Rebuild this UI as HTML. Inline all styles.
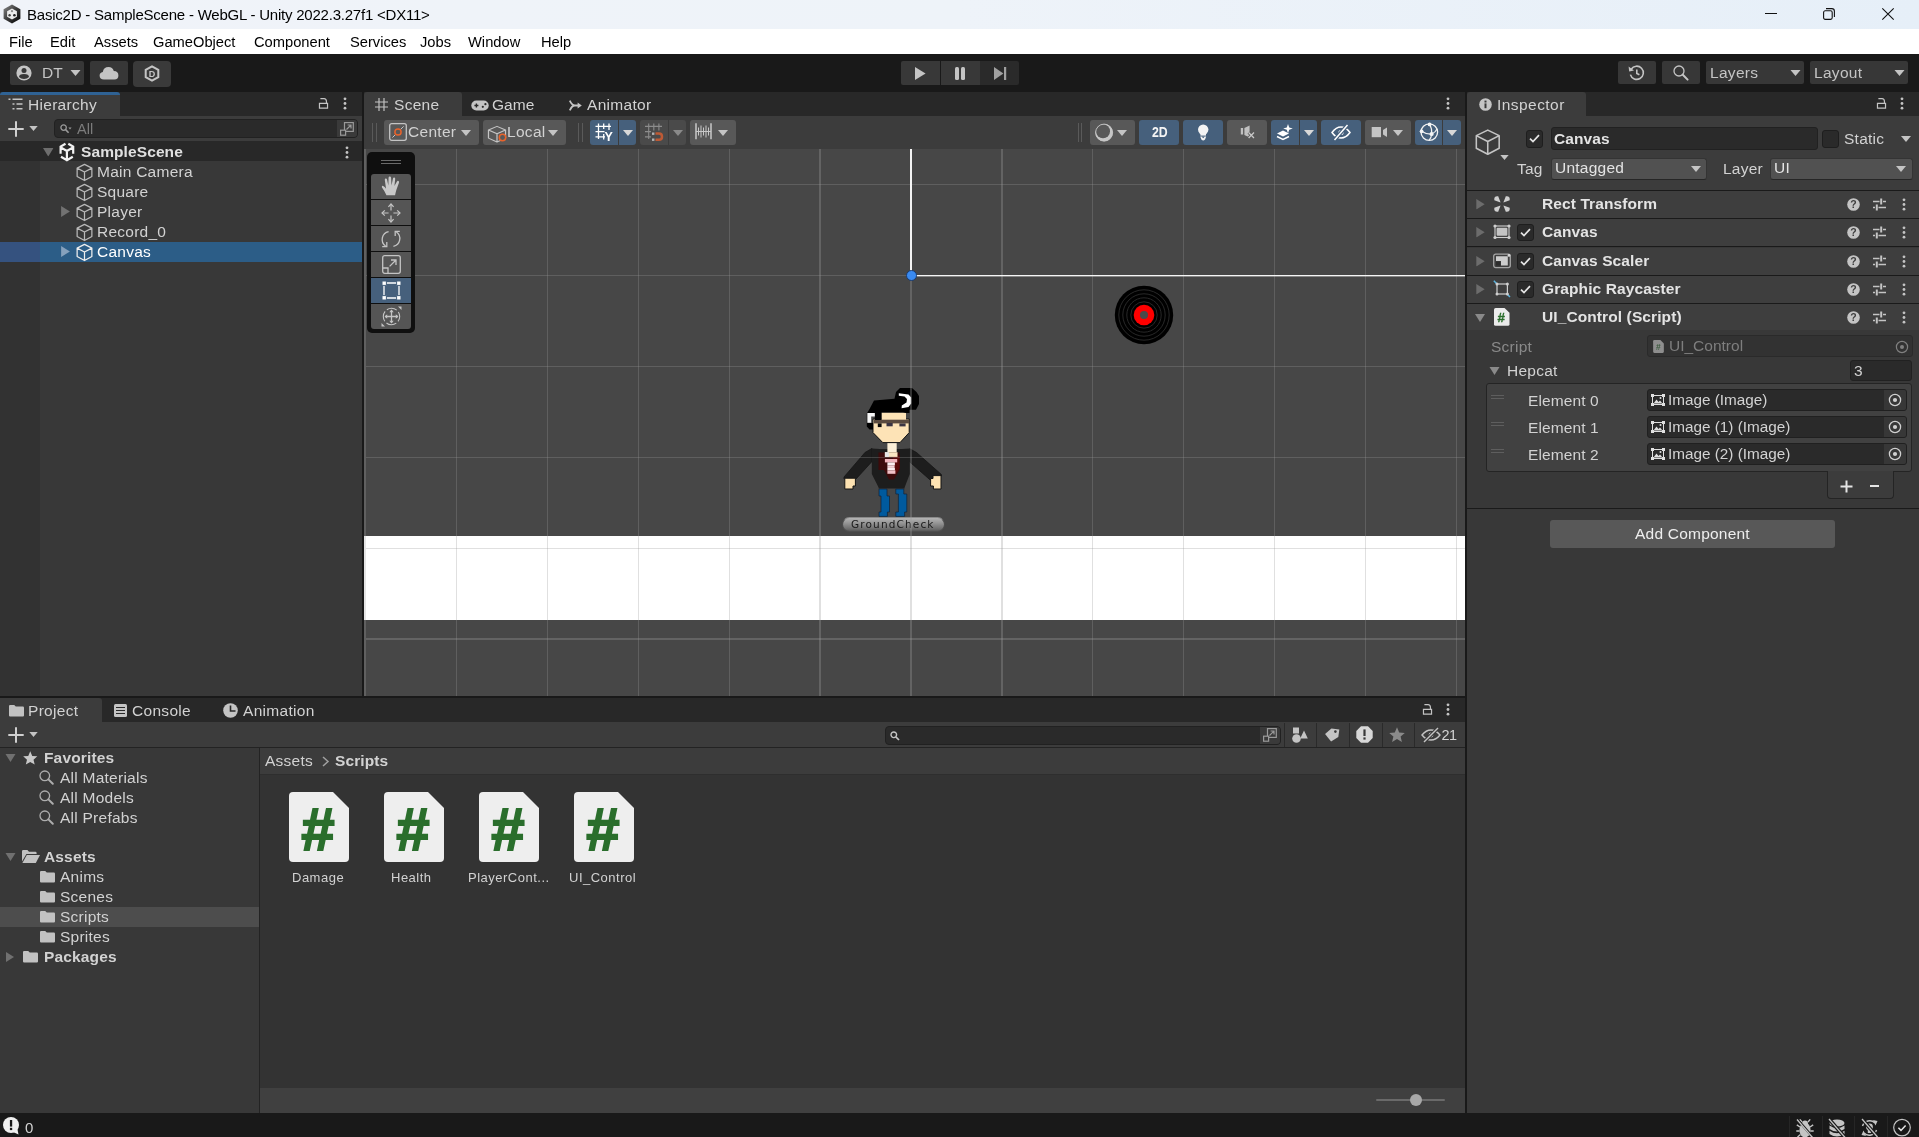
<!DOCTYPE html>
<html lang="en">
<head>
<meta charset="utf-8">
<title>Basic2D - SampleScene - WebGL - Unity 2022.3.27f1 &lt;DX11&gt;</title>
<style>
*{box-sizing:border-box;margin:0;padding:0}
html,body{width:1919px;height:1137px;overflow:hidden;background:#191919;font-family:"Liberation Sans",sans-serif;}
body{position:relative;will-change:transform;-webkit-font-smoothing:antialiased}
.a{position:absolute}
.t{position:absolute;white-space:nowrap;color:#d2d2d2;font-size:15px;line-height:20px;height:20px}
.b{font-weight:bold}
.h{font-size:15.5px;letter-spacing:.25px}
.k{color:#000}
.m{font-size:14.7px;color:#000;top:31.500px}
svg{position:absolute;overflow:visible}
.btn{position:absolute;background:#585858;border-radius:3px}
.bon{position:absolute;background:#46607c;border-radius:3px}
.fld{position:absolute;background:#2a2a2a;border:1px solid #212121;border-radius:3px}
.hl{position:absolute;height:1px;background:#1f1f1f}
.gv{position:absolute;top:149px;width:1px;height:547px;background:rgba(153,153,153,.3)}
.gh{position:absolute;left:366px;width:1099px;height:1px;background:rgba(153,153,153,.3)}
</style>
</head>
<body>

<svg width="0" height="0" style="position:absolute">
<defs>
<symbol id="cube" viewBox="0 0 16 16"><path d="M8 1.2 L14.2 4.3 L14.2 11.4 L8 14.8 L1.8 11.4 L1.8 4.3 Z M1.8 4.3 L8 7.6 L14.2 4.3 M8 7.6 L8 14.8" fill="none" stroke="currentColor" stroke-width="1.05" stroke-linejoin="round"/></symbol>
<symbol id="keb" viewBox="0 0 4 14"><circle cx="2" cy="2" r="1.5" fill="currentColor"/><circle cx="2" cy="7" r="1.5" fill="currentColor"/><circle cx="2" cy="12" r="1.5" fill="currentColor"/></symbol>
<symbol id="lock" viewBox="0 0 12 12" preserveAspectRatio="none"><path d="M1.6 6.4 h8.8 v4.8 h-8.8 Z" fill="none" stroke="currentColor" stroke-width="1.3"/><path d="M2.600 1.700 H6.600 Q9.200 1.700 9.200 4.300 V6.400" fill="none" stroke="currentColor" stroke-width="1.300"/></symbol>
<symbol id="dd" viewBox="0 0 10 6"><path d="M0 0 H10 L5 6 Z" fill="currentColor"/></symbol>
<symbol id="fr" viewBox="0 0 8 10"><path d="M0 0 L8 5 L0 10 Z" fill="currentColor"/></symbol>
<symbol id="fd" viewBox="0 0 10 8"><path d="M0 0 H10 L5 8 Z" fill="currentColor"/></symbol>
</defs>
</svg>
<!-- TITLE BAR -->
<div class="a" id="titlebar" style="left:0;top:0;width:1919px;height:29px;background:linear-gradient(90deg,#f0f3f9 0%,#eef3f9 50%,#e6eff8 100%)"></div>
<div class="t k" style="left:27px;top:5px;font-size:15px;letter-spacing:-.22px">Basic2D - SampleScene - WebGL - Unity 2022.3.27f1 &lt;DX11&gt;</div>

<svg style="left:3px;top:4px" width="18" height="20" viewBox="0 0 18 20"><defs><linearGradient id="ug" x1="0" y1="0" x2="1" y2="1"><stop offset="0" stop-color="#8a8a8a"/><stop offset=".5" stop-color="#3a3a3a"/><stop offset="1" stop-color="#000"/></linearGradient></defs><path d="M9 0.600 L17.400 5.300 V14.700 L9 19.400 L0.600 14.700 V5.300 Z" fill="url(#ug)"/><path d="M9 4.400 L13.900 7.200 V12.800 L9 15.600 L4.100 12.800 V7.200 Z" fill="#ececec"/><circle cx="9" cy="7.200" r="1.100" fill="#8a8a8a"/><circle cx="6.600" cy="11.200" r="1.200" fill="#444"/><circle cx="11.400" cy="11.200" r="1.300" fill="#222"/></svg>
<div class="a" style="left:1765px;top:13px;width:12px;height:1px;background:#111"></div>
<svg style="left:1823px;top:8px" width="12" height="12" viewBox="0 0 12 12"><rect x="0.600" y="2.800" width="8.600" height="8.600" rx="1.600" fill="none" stroke="#111" stroke-width="1.100"/><path d="M3 0.600 H8.800 Q11.400 0.600 11.400 3.200 V9" fill="none" stroke="#111" stroke-width="1.100"/></svg>
<svg style="left:1882px;top:8px" width="12" height="12" viewBox="0 0 12 12"><path d="M0.300 0.300 L11.700 11.700 M11.700 0.300 L0.300 11.700" stroke="#111" stroke-width="1.100"/></svg>
<!-- MENU BAR -->
<div class="a" id="menubar" style="left:0;top:29px;width:1919px;height:25px;background:#fff"></div>
<div class="t m" style="left:9px">File</div>
<div class="t m" style="left:50px">Edit</div>
<div class="t m" style="left:94px">Assets</div>
<div class="t m" style="left:153px">GameObject</div>
<div class="t m" style="left:254px">Component</div>
<div class="t m" style="left:350px">Services</div>
<div class="t m" style="left:420px">Jobs</div>
<div class="t m" style="left:468px">Window</div>
<div class="t m" style="left:541px">Help</div>
<!-- MAIN TOOLBAR -->
<div class="a" id="toolbar" style="left:0;top:54px;width:1919px;height:38px;background:#191919"></div>


<div class="a" style="left:10px;top:61px;width:74px;height:24px;background:#373737;border-radius:2px"></div>
<svg style="left:16px;top:65px;color:#c4c4c4" width="16" height="16" viewBox="0 0 16 16"><circle cx="8" cy="8" r="7.6" fill="currentColor"/><circle cx="8" cy="5.6" r="2.5" fill="#373737"/><path d="M3 12 Q3 8.9 8 8.9 Q13 8.9 13 12 Q11 14 8 14 Q5 14 3 12Z" fill="#373737"/></svg>
<div class="t" style="left:42px;top:63px;color:#c4c4c4;font-size:15.5px">DT</div>
<svg style="left:70px;top:70px;color:#c4c4c4" width="11" height="6"><use href="#dd"/></svg>
<div class="a" style="left:90px;top:61px;width:38px;height:24px;background:#373737;border-radius:2px"></div>
<svg style="left:99px;top:66px" width="20" height="14" viewBox="0 0 20 14"><path d="M5 13.5 Q0.6 13.5 0.6 9.6 Q0.6 6.6 3.8 6 Q4.6 1 9.6 1 Q13.6 1 14.8 5 Q19.4 5.2 19.4 9.4 Q19.4 13.5 15.4 13.5 Z" fill="#c4c4c4"/></svg>
<div class="a" style="left:133px;top:61px;width:38px;height:26px;background:#3a3a3a;border-radius:4px"></div>
<svg style="left:144px;top:65px" width="16" height="17" viewBox="0 0 16 17"><path d="M8 1.3 L14.3 4.9 V12.1 L8 15.7 L1.7 12.1 V4.9 Z" fill="none" stroke="#c4c4c4" stroke-width="2"/><text x="8" y="11.800" font-size="9" font-weight="bold" text-anchor="middle" fill="#c4c4c4" font-family="Liberation Sans, sans-serif">D</text></svg>
<!-- play controls -->
<div class="a" style="left:901px;top:61px;width:39px;height:24px;background:#383838;border-radius:2px 0 0 2px"></div>
<div class="a" style="left:941px;top:61px;width:39px;height:24px;background:#383838"></div>
<div class="a" style="left:980px;top:61px;width:39px;height:24px;background:#2a2a2a;border-radius:0 2px 2px 0"></div>
<svg style="left:915px;top:67px" width="11" height="13" viewBox="0 0 11 13"><path d="M0 0 L10.6 6.5 L0 13 Z" fill="#c4c4c4"/></svg>
<div class="a" style="left:955px;top:67px;width:4px;height:13px;background:#c4c4c4;border-radius:1.5px"></div>
<div class="a" style="left:961px;top:67px;width:4px;height:13px;background:#c4c4c4;border-radius:1.5px"></div>
<svg style="left:994px;top:67px" width="13" height="13" viewBox="0 0 13 13"><path d="M0 0 L9.4 6.5 L0 13 Z" fill="#a0a0a0"/><rect x="10" y="0" width="2.2" height="13" fill="#a0a0a0"/></svg>
<!-- right toolbar -->
<div class="a" style="left:1618px;top:61px;width:38px;height:23px;background:#373737;border-radius:2px"></div>
<svg style="left:1628px;top:65px" width="17" height="16" viewBox="0 0 17 16"><path d="M3.2 4.2 A6.6 6.6 0 1 1 2.4 9.6" fill="none" stroke="#c4c4c4" stroke-width="1.6"/><path d="M0.6 1.6 L1.2 6.6 L6 5.6 Z" fill="#c4c4c4"/><path d="M8.8 4.4 V8.4 L11.4 9.8" fill="none" stroke="#c4c4c4" stroke-width="1.6"/></svg>
<div class="a" style="left:1662px;top:61px;width:38px;height:23px;background:#373737;border-radius:2px"></div>
<svg style="left:1673px;top:65px" width="16" height="16" viewBox="0 0 16 16"><circle cx="6" cy="6" r="5" fill="none" stroke="#c4c4c4" stroke-width="1.3"/><path d="M9.8 9.8 L14.6 14.6" stroke="#c4c4c4" stroke-width="2" stroke-linecap="round"/></svg>
<div class="a" style="left:1706px;top:61px;width:98px;height:23px;background:#373737;border-radius:2px"></div>
<div class="t" style="left:1710px;top:63px;color:#c4c4c4;font-size:15.5px;letter-spacing:.3px">Layers</div>
<svg style="left:1790px;top:70px;color:#c4c4c4" width="11" height="6"><use href="#dd"/></svg>
<div class="a" style="left:1810px;top:61px;width:98px;height:23px;background:#373737;border-radius:2px"></div>
<div class="t" style="left:1814px;top:63px;color:#c4c4c4;font-size:15.5px;letter-spacing:.3px">Layout</div>
<svg style="left:1894px;top:70px;color:#c4c4c4" width="11" height="6"><use href="#dd"/></svg>

<!-- HIERARCHY PANEL -->
<div class="a" id="hier" style="left:0;top:92px;width:362px;height:604px;background:#383838"></div>

<div class="a" style="left:0;top:92px;width:362px;height:24px;background:#282828"></div>
<div class="a" style="left:0;top:92px;width:120px;height:24px;background:#3c3c3c;border-top:3px solid #2f6294;border-radius:3px 3px 0 0"></div>
<div class="a" style="left:0;top:116px;width:362px;height:25px;background:#3c3c3c"></div>
<svg style="left:8px;top:98px" width="15" height="12" viewBox="0 0 15 12"><path d="M0.5 1.2 H2.5 M4.5 1.2 H14.5 M4.5 6 H6.5 M8.5 6 H14.5 M4.5 10.8 H6.5 M8.5 10.8 H14.5" stroke="#c4c4c4" stroke-width="1.5" fill="none"/></svg>
<div class="t" style="left:28px;top:95px;letter-spacing:.3px;font-size:15.5px">Hierarchy</div>
<svg style="left:318px;top:97px;color:#c4c4c4" width="11" height="12"><use href="#lock"/></svg>
<svg style="left:343px;top:96.5px;color:#c4c4c4" width="4" height="13"><use href="#keb"/></svg>
<!-- search row -->

<svg style="left:8px;top:121px" width="16" height="16" viewBox="0 0 16 16"><path d="M8 0.300 V15.700 M0.300 8 H15.700" stroke="#d0d0d0" stroke-width="2"/></svg>
<svg style="left:29px;top:126px;color:#c4c4c4" width="9" height="5"><use href="#dd"/></svg>
<div class="a" style="left:54px;top:119px;width:304px;height:19px;background:#2a2a2a;border:1px solid #212121;border-radius:4px"></div>
<div class="a" style="left:337px;top:120px;width:20px;height:17px;background:#3a3a3a;border-radius:0 3px 3px 0"></div>
<svg style="left:340px;top:122px" width="14" height="14" viewBox="0 0 14 14"><rect x="4.5" y="0.6" width="8.8" height="8.8" fill="none" stroke="#9a9a9a" stroke-width="1.2"/><rect x="0.6" y="8.2" width="5" height="5" fill="#3a3a3a" stroke="#9a9a9a" stroke-width="1.2"/><path d="M6.5 7.5 L11 3 M7.6 3 H11 V6.4" fill="none" stroke="#9a9a9a" stroke-width="1.2"/></svg>
<svg style="left:60px;top:124px" width="12" height="10" viewBox="0 0 12 10"><circle cx="3.6" cy="3.6" r="2.7" fill="none" stroke="#9a9a9a" stroke-width="1.3"/><path d="M5.6 5.6 L8.6 8.8" stroke="#9a9a9a" stroke-width="1.6"/><path d="M8.4 3.4 H11.6 L10 5.4 Z" fill="#9a9a9a"/></svg>
<div class="t" style="left:77px;top:119px;color:#7c7c7c;font-size:14.5px">All</div>
<!-- tree -->
<div class="a" style="left:0;top:161px;width:40px;height:535px;background:#323232"></div>
<div class="a" style="left:0;top:141px;width:362px;height:20px;background:#282828"></div>
<div class="a" style="left:0;top:242px;width:362px;height:20px;background:#2c5d87"></div>
<div class="a" style="left:0;top:242px;width:40px;height:20px;background:#35527f"></div>
<svg style="left:43px;top:148px;color:#6e6e6e" width="10.500" height="8.500"><use href="#fd"/></svg>
<svg style="left:54px;top:140px" width="26" height="24" viewBox="0 0 26 24"><path d="M12.900 11 V19.500 M12.900 11 L6.800 7.400 M12.900 11 L19 7.400 M11.500 3.700 L6.600 6.600 V13.800 M14.300 3.700 L19.200 6.600 V13.800 M7 16.800 L12.900 20.200 L18.800 16.800" fill="none" stroke="#f2f2f2" stroke-width="2.200"/></svg>
<div class="t b" style="left:81px;top:142px;font-size:15.5px;letter-spacing:.1px;color:#e0e0e0">SampleScene</div>
<svg style="left:345px;top:145.5px;color:#c4c4c4" width="4" height="13"><use href="#keb"/></svg>
<svg style="left:74.5px;top:162.5px;color:#b9b9b9" width="19" height="19"><use href="#cube"/></svg>
<div class="t h" style="left:97px;top:162px">Main Camera</div>
<svg style="left:74.5px;top:182.5px;color:#b9b9b9" width="19" height="19"><use href="#cube"/></svg>
<div class="t h" style="left:97px;top:182px">Square</div>
<svg style="left:61px;top:206px;color:#727272" width="9" height="11"><use href="#fr"/></svg>
<svg style="left:74.5px;top:202.5px;color:#b9b9b9" width="19" height="19"><use href="#cube"/></svg>
<div class="t h" style="left:97px;top:202px">Player</div>
<svg style="left:74.5px;top:222.5px;color:#b9b9b9" width="19" height="19"><use href="#cube"/></svg>
<div class="t h" style="left:97px;top:222px">Record_0</div>
<svg style="left:61px;top:246px;color:#86a1bd" width="9" height="11"><use href="#fr"/></svg>
<svg style="left:74.5px;top:242.5px;color:#f0f0f0" width="19" height="19"><use href="#cube"/></svg>
<div class="t h" style="left:97px;top:242px;color:#fff">Canvas</div>

<!-- SCENE PANEL -->
<div class="a" id="scene" style="left:364px;top:92px;width:1101px;height:604px;background:#3c3c3c"></div>

<div class="a" style="left:364px;top:92px;width:1101px;height:24px;background:#282828"></div>
<div class="a" style="left:364px;top:92px;width:98px;height:24px;background:#3c3c3c;border-radius:3px 3px 0 0"></div>
<svg style="left:375px;top:98px" width="13" height="13" viewBox="0 0 13 13"><path d="M4 0 V13 M9 0 V13 M0 4 H13 M0 9 H13" stroke="#c4c4c4" stroke-width="1.150"/></svg>
<div class="t" style="left:394px;top:95px;letter-spacing:.3px;font-size:15.5px">Scene</div>
<svg style="left:471px;top:100px" width="18" height="11" viewBox="0 0 18 11"><rect x="0.3" y="0.5" width="17.4" height="10" rx="5" fill="#c4c4c4"/><path d="M3.4 5.5 H7.4 M5.4 3.5 V7.5" stroke="#282828" stroke-width="1.4"/><circle cx="11.8" cy="6.8" r="1.1" fill="#282828"/><circle cx="14.4" cy="4.2" r="1.1" fill="#282828"/></svg>
<div class="t" style="left:492px;top:95px;letter-spacing:.05px;font-size:15.5px">Game</div>
<svg style="left:569px;top:98.500px" width="13" height="13" viewBox="0 0 13 13"><path d="M0.800 1.600 Q3 6.500 6 6.500 Q3 6.500 0.800 11.400 M5.400 6.500 H9.400" fill="none" stroke="#c4c4c4" stroke-width="1.8"/><path d="M8.6 3.6 L12.8 6.5 L8.6 9.4 Z" fill="#c4c4c4"/></svg>
<div class="t" style="left:587px;top:95px;letter-spacing:.3px;font-size:15.5px">Animator</div>
<svg style="left:1446px;top:96.5px;color:#c4c4c4" width="4" height="13"><use href="#keb"/></svg>
<!-- scene toolbar -->
<div class="a" style="left:372px;top:123px;width:1px;height:19px;background:#5a5a5a"></div>
<div class="a" style="left:376px;top:123px;width:1px;height:19px;background:#5a5a5a"></div>
<div class="btn" style="left:384px;top:120px;width:95px;height:25px"></div>
<svg style="left:389px;top:123px" width="18" height="18" viewBox="0 0 18 18"><rect x="0.7" y="0.7" width="16.6" height="16.6" rx="2" fill="none" stroke="#c4c4c4" stroke-width="1.3"/><path d="M3.4 14.6 L14.6 3.4" stroke="#c4c4c4" stroke-width="1"/><circle cx="9" cy="9" r="3.1" fill="#585858" stroke="#e8632c" stroke-width="1.5"/></svg>
<div class="t" style="left:408px;top:122px;letter-spacing:.3px;font-size:15.5px">Center</div>
<svg style="left:461px;top:130px;color:#c4c4c4" width="10" height="6"><use href="#dd"/></svg>
<div class="btn" style="left:483px;top:120px;width:83px;height:25px"></div>
<svg style="left:486.200px;top:124.700px;color:#c4c4c4" width="22" height="18.400" viewBox="0 0 16 16" preserveAspectRatio="none"><path d="M8 1.200 L14.200 4.300 L14.200 11.400 L8 14.800 L1.800 11.400 L1.800 4.300 Z M1.800 4.300 L8 7.600 L14.200 4.300 M8 7.600 L8 14.800" fill="none" stroke="currentColor" stroke-width="0.900" stroke-linejoin="round"/></svg>
<svg style="left:498px;top:133px" width="9" height="9" viewBox="0 0 9 9"><circle cx="4.5" cy="4.5" r="3.2" fill="#585858" stroke="#e8632c" stroke-width="1.5"/></svg>
<div class="t" style="left:507px;top:122px;letter-spacing:.3px;font-size:15.5px">Local</div>
<svg style="left:548px;top:130px;color:#c4c4c4" width="10" height="6"><use href="#dd"/></svg>
<div class="a" style="left:578px;top:123px;width:1px;height:19px;background:#5a5a5a"></div>
<div class="a" style="left:582px;top:123px;width:1px;height:19px;background:#5a5a5a"></div>
<div class="bon" style="left:590px;top:120px;width:28px;height:25px;border-radius:3px 0 0 3px"></div>
<div class="bon" style="left:619px;top:120px;width:17px;height:25px;border-radius:0 3px 3px 0"></div>

<svg style="left:623px;top:130px;color:#d8d8d8" width="10" height="6"><use href="#dd"/></svg>
<div class="a" style="left:640px;top:120px;width:28px;height:25px;background:#4a4a4a;border-radius:3px 0 0 3px"></div>
<div class="a" style="left:669px;top:120px;width:17px;height:25px;background:#4a4a4a;border-radius:0 3px 3px 0"></div>

<svg style="left:673px;top:130px;color:#8a8a8a" width="10" height="6"><use href="#dd"/></svg>
<div class="btn" style="left:690px;top:120px;width:46px;height:25px"></div>

<svg style="left:718px;top:130px;color:#c4c4c4" width="10" height="6"><use href="#dd"/></svg>
<svg style="left:588px;top:118px" width="152" height="30" viewBox="0 0 152 30">
<path d="M10.500 5.500 V21 M15.700 5.500 V11 M15.700 16 V21.500 M21 5.500 V12 M7.500 8.400 H23 M7.500 13.600 H16.500 M7.500 18.900 H17" stroke="#fff" stroke-width="1.300" fill="none"/>
<text x="20.600" y="22.600" font-size="12.500" font-weight="bold" text-anchor="middle" fill="#fff" font-family="Liberation Sans, sans-serif">Y</text>
<path d="M60.700 5.500 V21 M65.800 5.500 V12.500 M70.900 5.500 V12.500 M57 8.400 H74 M57 13.600 H63 M57 18.900 H63" stroke="#8c8c8c" stroke-width="1.100" fill="none"/>
<rect x="64" y="14.500" width="2.400" height="2.400" fill="#b4b4b4"/><rect x="64" y="20.500" width="2.400" height="2.400" fill="#b4b4b4"/>
<path d="M67.500 15.600 H71 Q74 15.600 74 18.700 Q74 21.800 71 21.800 H67.500" stroke="#bd5a35" stroke-width="2.500" fill="none"/>
<path d="M108 5.200 V21.300 M123 5.200 V21.300" stroke="#c8c8c8" stroke-width="1.500"/>
<path d="M110.500 9.500 V17.500 M113 7.500 V19.500 M115.500 9.500 V17.500 M118 7.500 V19.500 M120.500 9.500 V17.500 M108 13.500 H123" stroke="#c8c8c8" stroke-width="1"/>
</svg>
<!-- right side toolbar -->
<div class="a" style="left:1078px;top:123px;width:1px;height:19px;background:#5a5a5a"></div>
<div class="a" style="left:1081px;top:123px;width:1px;height:19px;background:#5a5a5a"></div>
<div class="btn" style="left:1090px;top:120px;width:45px;height:25px"></div>
<svg style="left:1086px;top:116px" width="40" height="32" viewBox="0 0 40 32"><circle cx="18.100" cy="16.600" r="8.700" fill="#c6c6c6"/><circle cx="17" cy="15.300" r="7" fill="#585858"/><circle cx="18.100" cy="16.600" r="8.500" fill="none" stroke="#c6c6c6" stroke-width="0.900"/></svg>
<svg style="left:1117px;top:130px;color:#c4c4c4" width="10" height="6"><use href="#dd"/></svg>
<div class="bon" style="left:1139px;top:120px;width:40px;height:25px"></div>
<div class="t b" style="left:1151.500px;top:122px;font-size:14px;color:#f4f4f4;transform:scaleX(.88);transform-origin:0 0">2D</div>
<div class="bon" style="left:1183px;top:120px;width:40px;height:25px"></div>
<svg style="left:1196px;top:124px" width="14" height="18" viewBox="0 0 14 18"><circle cx="7.200" cy="5.600" r="5.200" fill="#f4f4f4"/><path d="M4.400 9 H10 V11.600 H4.400 Z" fill="#f4f4f4"/><path d="M4.200 12.600 H10.200 L9 15.600 Q7.200 17.600 5.400 15.600 Z" fill="#f4f4f4"/><path d="M5.600 12.600 L7.200 14.200 L8.800 12.600 Z" fill="#46607c"/></svg>
<div class="btn" style="left:1227px;top:120px;width:40px;height:25px"></div>
<svg style="left:1240px;top:125px" width="16" height="14" viewBox="0 0 16 14"><path d="M0.800 3 H3.100 V9.600 H0.800Z M4.400 3 L9.600 0.600 V12.400 L4.400 10 Z" fill="#c0c0c0"/><path d="M8.600 7.500 L14 13 M14 7.500 L8.600 13" stroke="#585858" stroke-width="3"/><path d="M8.600 7.500 L14 13 M14 7.500 L8.600 13" stroke="#c8c8c8" stroke-width="1.300"/></svg>
<div class="bon" style="left:1271px;top:120px;width:28px;height:25px;border-radius:3px 0 0 3px"></div>
<div class="bon" style="left:1300px;top:120px;width:17px;height:25px;border-radius:0 3px 3px 0"></div>
<svg style="left:1276px;top:124px" width="18" height="17" viewBox="0 0 18 17"><path d="M1 9.500 L7 6.600 L13 9.500 L7 12.400 Z" fill="#fff"/><path d="M1 12.500 L7 15.400 L13 12.500" stroke="#fff" stroke-width="1.5" fill="none"/><path d="M12 0 L13.200 3.400 L16.800 4.600 L13.200 5.800 L12 9.200 L10.800 5.800 L7.200 4.600 L10.800 3.400 Z" fill="#fff"/></svg>
<svg style="left:1304px;top:130px;color:#d8d8d8" width="10" height="6"><use href="#dd"/></svg>
<div class="bon" style="left:1321px;top:120px;width:40px;height:25px"></div>
<svg style="left:1331px;top:124px" width="20" height="17" viewBox="0 0 20 17"><path d="M1 8.500 Q5 3 10 3 Q15 3 19 8.500 Q15 14 10 14 Q5 14 1 8.500 Z" fill="none" stroke="#fff" stroke-width="1.5"/><circle cx="10" cy="8.500" r="2.600" fill="#fff"/><path d="M3.500 16 L16.500 1" stroke="#46607c" stroke-width="4"/><path d="M3.500 16 L16.500 1" stroke="#fff" stroke-width="1.500"/></svg>
<div class="btn" style="left:1365px;top:120px;width:46px;height:25px"></div>
<svg style="left:1371px;top:127px" width="17" height="11" viewBox="0 0 17 11"><rect x="0.700" y="0" width="9.300" height="10.200" fill="#c4c4c4"/><path d="M12 3 L16 0.400 V10 L12 7.400 Z" fill="#c4c4c4"/></svg>
<svg style="left:1393px;top:130px;color:#c4c4c4" width="10" height="6"><use href="#dd"/></svg>
<div class="bon" style="left:1415px;top:120px;width:27px;height:25px;border-radius:3px 0 0 3px"></div>
<div class="bon" style="left:1443px;top:120px;width:18px;height:25px;border-radius:0 3px 3px 0"></div>
<svg style="left:1419px;top:122px" width="21" height="21" viewBox="0 0 21 21"><circle cx="10.300" cy="10.100" r="8.300" fill="none" stroke="#f4f4f4" stroke-width="1.300"/><path d="M10.600 2.400 Q13.400 7 12.600 12.100 M2.600 9.300 Q7 12.400 12.600 12.100 M12.600 12.100 Q12.400 16 10 18.300 M12.600 12.100 Q16.400 10.400 18 7" fill="none" stroke="#f4f4f4" stroke-width="1.100"/><circle cx="10.600" cy="2.400" r="1.900" fill="#f4f4f4"/><circle cx="2.600" cy="9.300" r="1.900" fill="#f4f4f4"/><circle cx="12.600" cy="12.100" r="2.100" fill="#f4f4f4"/></svg>
<svg style="left:1447px;top:130px;color:#d8d8d8" width="10" height="6"><use href="#dd"/></svg>
<!-- scene view -->
<div class="a" id="sv" style="left:364px;top:149px;width:1101px;height:547px;background:#474747"></div>

<div class="a" style="left:364px;top:536px;width:1101px;height:84px;background:#fff"></div>
<svg style="left:1113px;top:284px" width="62" height="62" viewBox="0 0 62 62"><circle cx="31" cy="31" r="29.200" fill="#000"/><circle cx="31" cy="31" r="25.200" fill="none" stroke="#2c2c2c" stroke-width="0.900"/><circle cx="31" cy="31" r="21.200" fill="none" stroke="#2c2c2c" stroke-width="0.900"/><circle cx="31" cy="31" r="17.200" fill="none" stroke="#2c2c2c" stroke-width="0.900"/><circle cx="31" cy="31" r="13.200" fill="none" stroke="#2c2c2c" stroke-width="0.900"/><circle cx="31" cy="31" r="10.300" fill="#fe0000"/><circle cx="31" cy="31" r="4" fill="#4a4a4a"/></svg>
<svg id="char" style="left:840px;top:385px" width="110" height="150" viewBox="840 385 110 150">
<!-- arms -->
<path d="M872 448.400 L865 452.500 L844 477 L844 479 L856 479 L872 461.500 Z" fill="#1d1d1d" stroke="#151515" stroke-width="0.800"/>
<path d="M909.800 448.800 L916.500 452.500 L941.400 474.500 L941.400 476 L930.200 480 L909.800 462 Z" fill="#1d1d1d" stroke="#151515" stroke-width="0.800"/>
<!-- hands -->
<path d="M844.800 478.200 H855.400 V486 H853 V489 H844.800 Z" fill="#fde2b2" stroke="#141414" stroke-width="1"/>
<path d="M933 475.600 H941 V489 H933.400 V486 H930.600 V478.500 H933 Z" fill="#fde2b2" stroke="#141414" stroke-width="1"/>
<!-- body -->
<path d="M871.800 448.600 L880 449 H902 L909.800 448.600 V474 L904.600 487.500 V488.600 H878.600 V487.500 L871.800 474 Z" fill="#1d1d1d"/>
<path d="M878.500 452.500 H899.600 V470 L894 479.600 H889 L884 470 H878.500 Z" fill="#3c0b0b"/>
<path d="M893 456 H899.600 V468 L896 474 H893 Z" fill="#5a0a0a"/>
<!-- neck & shirt -->
<rect x="887.400" y="443" width="9.300" height="9" fill="#fdf0d8"/>
<rect x="884.900" y="452.200" width="12.600" height="4.700" fill="#fbe6c2"/>
<rect x="884.900" y="452.200" width="4" height="4.700" fill="#e6e6e6"/>
<rect x="884.900" y="459" width="12.300" height="3.400" fill="#f0b4bc"/>
<rect x="887.400" y="462.400" width="7.500" height="2.900" fill="#fbeef0"/>
<rect x="887.400" y="465.300" width="7.200" height="2.600" fill="#f4d4d8"/>
<rect x="887.400" y="467.900" width="7.500" height="2.500" fill="#fbeef0"/>
<rect x="887.400" y="470.400" width="8" height="3.400" fill="#f0c0c6"/>
<!-- legs -->
<path d="M879 489 H887 V496 H889.500 V512 H887.400 V516.400 H879 V512 H881 V496 H879 Z" fill="#005a9e" stroke="#10243a" stroke-width="0.700"/>
<path d="M895.800 489 H903.800 V494 H906.800 V512 H904.600 V516.400 H895.800 V512 H898.400 V494 H895.800 Z" fill="#005a9e" stroke="#10243a" stroke-width="0.700"/>
<!-- head -->
<path d="M873 419 H909.200 V432.600 L900 442.600 H882.800 L873 432.600 Z" fill="#fde3b6" stroke="#141414" stroke-width="1"/>
<rect x="881.500" y="412.600" width="24.500" height="8" fill="#fde3b6"/>
<rect x="874" y="419.700" width="35.200" height="3.700" fill="#5b4b3f"/>
<rect x="877.800" y="423.400" width="3.800" height="3.700" fill="#0a0a0a"/>
<rect x="886.500" y="423" width="6.200" height="3.300" fill="#3a3442"/>
<rect x="899.400" y="423.400" width="6.200" height="3" fill="#3a3442"/>
<!-- hair -->
<path d="M866.800 413.500 L869.500 409 L874 400.600 L894.500 398.800 L896 392 L900 388 H912 L916.500 392 L919 396 V404 L916 409.800 H909.500 V413 H906 L903 412.600 H881.500 V420 H874.800 V413 H867.400 V423 H873 V429.500 H869.500 L866.800 426.500 Z" fill="#000"/>
<path d="M898.800 393.200 L908.500 394.400 L911.200 397.500 V403.500 L908.500 407 L901.600 408.300 L901.800 405.600 L906.500 402.600 L907 399 L904.500 396.600 L898.800 395.800 Z" fill="#fff"/>
<path d="M867.400 413 H874.800 V416.600 H871.200 V422.800 H867.400 Z" fill="#f6f6f6"/>
</svg>
<div class="a" style="left:842px;top:516.500px;width:103px;height:15.500px;border-radius:7.700px;background:linear-gradient(#b4b4b4,#949494 40%,#6c6c6c 85%,#585858);border:1px solid #4e4e4e;border-top-color:#8a8a8a"></div>
<div class="t" style="left:851px;top:515px;font-size:10.5px;letter-spacing:1.15px;color:#1a1a1a;line-height:18px;height:18px;font-family:'DejaVu Sans','Liberation Sans',sans-serif">GroundCheck</div>
<div class="gv" style="left:364px;width:2px;background:rgba(160,160,160,.28)"></div><div class="gv" style="left:456px"></div><div class="gv" style="left:547px"></div><div class="gv" style="left:638px"></div><div class="gv" style="left:729px"></div><div class="gv" style="left:1092px"></div><div class="gv" style="left:1183px"></div><div class="gv" style="left:1274px"></div><div class="gv" style="left:1365px"></div><div class="gv" style="left:1456px"></div><div class="gv" style="left:819px;width:2px;background:rgba(160,160,160,.32)"></div><div class="gv" style="left:910px;width:2px;background:rgba(160,160,160,.32)"></div><div class="gv" style="left:1001px;width:2px;background:rgba(160,160,160,.32)"></div>
<div class="gh" style="top:184px"></div><div class="gh" style="top:275px"></div><div class="gh" style="top:366px"></div><div class="gh" style="top:457px"></div><div class="gh" style="top:548px"></div><div class="gh" style="top:638px;height:2px;background:rgba(160,160,160,.32)"></div>

<div class="a" style="left:910px;top:149px;width:2px;height:127px;background:#f4f4f4"></div>
<div class="a" style="left:911px;top:275px;width:554px;height:1px;background:#f6f6f6"></div><div class="a" style="left:911px;top:276px;width:554px;height:1px;background:rgba(255,255,255,.35)"></div>
<div class="a" style="left:906px;top:270px;width:11px;height:11px;border-radius:50%;background:#3a8af0;border:1px solid #1a3c70"></div>

<!-- tools overlay -->
<div class="a" style="left:367px;top:152px;width:48px;height:181px;background:#0f0f0f;border-radius:5px"></div>
<div class="a" style="left:381px;top:160px;width:20px;height:1px;background:#6a6a6a"></div>
<div class="a" style="left:381px;top:163px;width:20px;height:1px;background:#6a6a6a"></div>
<div class="a" style="left:371px;top:174px;width:40px;height:25px;background:#555;border-radius:3px 3px 0 0"></div>
<div class="a" style="left:371px;top:200px;width:40px;height:25px;background:#555"></div>
<div class="a" style="left:371px;top:226px;width:40px;height:25px;background:#555"></div>
<div class="a" style="left:371px;top:252px;width:40px;height:25px;background:#555"></div>
<div class="a" style="left:371px;top:278px;width:40px;height:25px;background:#46607c"></div>
<div class="a" style="left:371px;top:304px;width:40px;height:25px;background:#555;border-radius:0 0 3px 3px"></div>


<svg style="left:380.500px;top:176px" width="21" height="20" viewBox="0 0 20 19"><path d="M5.200 18.400 Q3.400 14 0.800 10.600 Q0.600 9.200 2 9.400 Q3.600 10 4.800 12 L3.600 3.600 Q3.600 2.400 4.600 2.400 Q5.600 2.400 5.800 3.600 L7 9 L7.200 1.600 Q7.300 0.400 8.400 0.400 Q9.500 0.400 9.600 1.600 L10 9 L11.400 2.400 Q11.700 1.200 12.700 1.400 Q13.700 1.600 13.500 2.900 L12.800 9.600 L15.200 5.200 Q15.800 4.200 16.700 4.700 Q17.500 5.200 17.100 6.300 L14.600 13.400 Q13.800 16.400 13.400 18.400 Z" fill="#c8c8c8"/></svg>
<svg style="left:381px;top:203px;color:#c4c4c4" width="20" height="20" viewBox="0 0 20 20"><path d="M10 1 V7.600 M10 12.400 V19 M1 10 H7.600 M12.400 10 H19" stroke="currentColor" stroke-width="1.200" fill="none"/><path d="M7.400 3.800 L10 1 L12.600 3.800 M7.400 16.200 L10 19 L12.600 16.200 M3.800 7.400 L1 10 L3.800 12.600 M16.200 7.400 L19 10 L16.200 12.600" stroke="currentColor" stroke-width="1.200" fill="none"/></svg>
<svg style="left:381px;top:229px;color:#c4c4c4" width="20" height="20" viewBox="0 0 20 20"><path d="M7.600 2.600 A8 8 0 0 0 4.600 17" stroke="currentColor" stroke-width="1.300" fill="none"/><path d="M1.200 17.600 H5.800 V13" stroke="currentColor" stroke-width="1.300" fill="none"/><path d="M12.400 17.400 A8 8 0 0 0 15.400 3" stroke="currentColor" stroke-width="1.300" fill="none"/><path d="M18.800 2.400 H14.200 V7" stroke="currentColor" stroke-width="1.300" fill="none"/></svg>
<svg style="left:382px;top:255px;color:#c4c4c4" width="19" height="19" viewBox="0 0 19 19"><rect x="0.700" y="0.700" width="17.600" height="17.600" rx="2" fill="none" stroke="currentColor" stroke-width="1.300"/><path d="M0.700 13 H6 V18.300" fill="none" stroke="currentColor" stroke-width="1.300"/><path d="M7.600 11.400 L14 5 M9 5 H14 V10" fill="none" stroke="currentColor" stroke-width="1.300"/></svg>
<svg style="left:382px;top:281px" width="19" height="19" viewBox="0 0 19 19"><path d="M2 2 H17 V17 H2 Z" fill="none" stroke="#fff" stroke-width="1.300"/><path d="M0 0 h4.400 v4.400 h-4.400z M14.600 0 h4.400 v4.400 h-4.400z M0 14.600 h4.400 v4.400 h-4.400z M14.600 14.600 h4.400 v4.400 h-4.400z" fill="#fff" stroke="#46607c" stroke-width="1"/></svg>
<svg style="left:381px;top:306px;color:#c4c4c4" width="21" height="21" viewBox="0 0 21 21"><circle cx="10.500" cy="10.500" r="8.200" fill="none" stroke="currentColor" stroke-width="1.100" stroke-dasharray="10.500 2.400" stroke-dashoffset="5.200"/><path d="M10.500 4 V17 M4 10.500 H17" stroke="currentColor" stroke-width="1.300"/><path d="M8.300 6.200 L10.500 3.600 L12.700 6.200Z M8.300 14.800 L10.500 17.400 L12.700 14.800Z M6.200 8.300 L3.600 10.500 L6.200 12.700Z M14.800 8.300 L17.400 10.500 L14.800 12.700Z" fill="currentColor"/><path d="M17 0.500 H20.500 V4 Z M0.500 17 V20.500 H4 Z" fill="currentColor"/></svg>

<!-- PROJECT PANEL -->
<div class="a" id="proj" style="left:0;top:698px;width:1465px;height:415px;background:#383838"></div>

<div class="a" style="left:0;top:698px;width:1465px;height:24px;background:#282828"></div>
<div class="a" style="left:0;top:698px;width:102px;height:24px;background:#3c3c3c;border-radius:0 3px 0 0"></div>
<div class="a" style="left:0;top:722px;width:1465px;height:25px;background:#3c3c3c"></div>
<svg style="left:8.5px;top:705.0px" width="15" height="11.500" viewBox="0 0 16 13" preserveAspectRatio="none"><path d="M0 1.200 Q0 0 1.200 0 H5.600 L7.200 1.800 H14.800 Q16 1.800 16 3 V11.800 Q16 13 14.800 13 H1.200 Q0 13 0 11.800 Z" fill="#c2c2c2"/></svg>
<div class="t" style="left:28px;top:701px;letter-spacing:.3px;font-size:15.5px">Project</div>
<svg style="left:114px;top:704px" width="13" height="13" viewBox="0 0 13 13"><rect x="0" y="0" width="13" height="13" rx="1.500" fill="#c4c4c4"/><path d="M2 3.500 H11 M2 6.500 H11 M2 9.500 H11" stroke="#282828" stroke-width="1.200"/></svg>
<div class="t" style="left:132px;top:701px;letter-spacing:.3px;font-size:15.5px">Console</div>
<svg style="left:223px;top:703px" width="15" height="15" viewBox="0 0 15 15"><circle cx="7.500" cy="7.500" r="7.300" fill="#c4c4c4"/><path d="M7.500 2.500 V8 H12.500" fill="none" stroke="#282828" stroke-width="1.600"/></svg>
<div class="t" style="left:243px;top:701px;letter-spacing:.3px;font-size:15.5px">Animation</div>
<svg style="left:1422px;top:703px;color:#c4c4c4" width="11" height="12"><use href="#lock"/></svg>
<svg style="left:1446px;top:702.5px;color:#c4c4c4" width="4" height="13"><use href="#keb"/></svg>
<!-- project toolbar -->
<div class="a" style="left:0;top:747px;width:1465px;height:1px;background:#232323"></div>
<svg style="left:8px;top:727px" width="16" height="16" viewBox="0 0 16 16"><path d="M8 0.300 V15.700 M0.300 8 H15.700" stroke="#d0d0d0" stroke-width="2"/></svg>
<svg style="left:29px;top:732px;color:#c4c4c4" width="9" height="5"><use href="#dd"/></svg>
<div class="a" style="left:885px;top:726px;width:396px;height:19px;background:#2a2a2a;border:1px solid #212121;border-radius:4px"></div>
<div class="a" style="left:1260px;top:727px;width:20px;height:17px;background:#3a3a3a;border-radius:0 3px 3px 0"></div>
<svg style="left:1263px;top:728px" width="14" height="14" viewBox="0 0 14 14"><rect x="4.500" y="0.600" width="8.800" height="8.800" fill="none" stroke="#9a9a9a" stroke-width="1.200"/><rect x="0.600" y="8.200" width="5" height="5" fill="#3a3a3a" stroke="#9a9a9a" stroke-width="1.200"/><path d="M6.500 7.500 L11 3 M7.600 3 H11 V6.400" fill="none" stroke="#9a9a9a" stroke-width="1.200"/></svg>
<svg style="left:890px;top:731px" width="10" height="10" viewBox="0 0 10 10"><circle cx="3.800" cy="3.800" r="2.800" fill="none" stroke="#c4c4c4" stroke-width="1.400"/><path d="M5.800 5.800 L9 9" stroke="#c4c4c4" stroke-width="1.700"/></svg>
<div class="a" style="left:1284px;top:723px;width:1px;height:24px;background:#2a2a2a"></div>
<div class="a" style="left:1316px;top:723px;width:1px;height:24px;background:#2a2a2a"></div>
<div class="a" style="left:1349px;top:723px;width:1px;height:24px;background:#2a2a2a"></div>
<div class="a" style="left:1382px;top:723px;width:1px;height:24px;background:#2a2a2a"></div>
<div class="a" style="left:1414px;top:723px;width:1px;height:24px;background:#2a2a2a"></div>
<svg style="left:1292px;top:727px" width="16" height="16" viewBox="0 0 16 16"><circle cx="4.500" cy="11.500" r="4.300" fill="#c4c4c4"/><rect x="1" y="0.500" width="6" height="6" fill="#c4c4c4"/><path d="M12 3.500 L15.800 11.500 H8.200 Z" fill="#c4c4c4"/></svg>
<svg style="left:1324px;top:728px" width="15" height="14" viewBox="0 0 15 14"><path d="M6.500 0.500 H14.500 V8 L8 13.500 L1 7 Z" fill="#c4c4c4" transform="rotate(8 7.500 7)"/><circle cx="11.400" cy="3.600" r="1.300" fill="#383838"/></svg>
<svg style="left:1356px;top:726px" width="17" height="17" viewBox="0 0 17 17"><path d="M5 0.300 H12 L16.700 5 V12 L12 16.700 H5 L0.300 12 V5 Z" fill="#d8d8d8"/><rect x="7.400" y="3.400" width="2.200" height="6.600" fill="#383838"/><rect x="7.400" y="11.400" width="2.200" height="2.200" fill="#383838"/></svg>
<svg style="left:1389px;top:727px" width="16" height="15" viewBox="0 0 16 15"><path d="M8 0.300 L10.200 5.400 L15.800 5.900 L11.600 9.600 L12.900 15 L8 12.100 L3.100 15 L4.400 9.600 L0.200 5.900 L5.800 5.400 Z" fill="#8a8a8a"/></svg>
<svg style="left:1421px;top:727px" width="20" height="16" viewBox="0 0 20 16"><path d="M1 8 Q5 3 10 3 Q15 3 19 8 Q15 13 10 13 Q5 13 1 8 Z" fill="none" stroke="#c4c4c4" stroke-width="1.400"/><circle cx="10" cy="8" r="2.400" fill="#c4c4c4"/><path d="M3 15 L17 1" stroke="#383838" stroke-width="3.600"/><path d="M3 15 L17 1" stroke="#c4c4c4" stroke-width="1.400"/></svg>
<div class="t" style="left:1441.500px;top:725px;font-size:14.500px;letter-spacing:-.6px">21</div>
<!-- left tree -->
<div class="a" style="left:259px;top:748px;width:1px;height:365px;background:#232323"></div>
<div class="a" style="left:0;top:907px;width:259px;height:20px;background:#4d4d4d"></div>
<svg style="left:5px;top:754px;color:#707070" width="11" height="8"><use href="#fd"/></svg>
<svg style="left:23px;top:751px" width="14.500" height="13.600" viewBox="0 0 16 15"><path d="M8 0.300 L10.200 5.400 L15.800 5.900 L11.600 9.600 L12.900 15 L8 12.100 L3.100 15 L4.400 9.600 L0.200 5.900 L5.800 5.400 Z" fill="#c8c8c8"/></svg>
<div class="t b" style="left:44px;top:748px;font-size:15.5px;letter-spacing:.15px">Favorites</div>
<svg style="left:39px;top:770px" width="15" height="15" viewBox="0 0 15 15"><circle cx="5.800" cy="5.800" r="4.800" fill="none" stroke="#adadad" stroke-width="1.300"/><path d="M9.400 9.400 L13.800 13.800" stroke="#adadad" stroke-width="2" stroke-linecap="round"/></svg><div class="t h" style="left:60px;top:768px">All Materials</div>
<svg style="left:39px;top:790px" width="15" height="15" viewBox="0 0 15 15"><circle cx="5.800" cy="5.800" r="4.800" fill="none" stroke="#adadad" stroke-width="1.300"/><path d="M9.400 9.400 L13.800 13.800" stroke="#adadad" stroke-width="2" stroke-linecap="round"/></svg><div class="t h" style="left:60px;top:788px">All Models</div>
<svg style="left:39px;top:810px" width="15" height="15" viewBox="0 0 15 15"><circle cx="5.800" cy="5.800" r="4.800" fill="none" stroke="#adadad" stroke-width="1.300"/><path d="M9.400 9.400 L13.800 13.800" stroke="#adadad" stroke-width="2" stroke-linecap="round"/></svg><div class="t h" style="left:60px;top:808px">All Prefabs</div>
<svg style="left:5px;top:853px;color:#707070" width="11" height="8"><use href="#fd"/></svg>
<svg style="left:22px;top:850px" width="18" height="13" viewBox="0 0 18 13"><path d="M0 1.200 Q0 0 1.200 0 H5.400 L7 1.800 H13.400 Q14.600 1.800 14.600 3 V4 H4.400 L0 11.600 Z" fill="#c2c2c2"/><path d="M4.800 5 H18 L13.800 13 H0.400 Z" fill="#c2c2c2"/></svg>
<div class="t b" style="left:44px;top:847px;font-size:15.5px;letter-spacing:.15px">Assets</div>
<svg style="left:39.5px;top:871.0px" width="15" height="11.500" viewBox="0 0 16 13" preserveAspectRatio="none"><path d="M0 1.200 Q0 0 1.200 0 H5.600 L7.200 1.800 H14.800 Q16 1.800 16 3 V11.800 Q16 13 14.800 13 H1.200 Q0 13 0 11.800 Z" fill="#c2c2c2"/></svg><div class="t h" style="left:60px;top:867px">Anims</div>
<svg style="left:39.5px;top:891.0px" width="15" height="11.500" viewBox="0 0 16 13" preserveAspectRatio="none"><path d="M0 1.200 Q0 0 1.200 0 H5.600 L7.200 1.800 H14.800 Q16 1.800 16 3 V11.800 Q16 13 14.800 13 H1.200 Q0 13 0 11.800 Z" fill="#c2c2c2"/></svg><div class="t h" style="left:60px;top:887px">Scenes</div>
<svg style="left:39.5px;top:911.0px" width="15" height="11.500" viewBox="0 0 16 13" preserveAspectRatio="none"><path d="M0 1.200 Q0 0 1.200 0 H5.600 L7.200 1.800 H14.800 Q16 1.800 16 3 V11.800 Q16 13 14.800 13 H1.200 Q0 13 0 11.800 Z" fill="#c2c2c2"/></svg><div class="t h" style="left:60px;top:907px">Scripts</div>
<svg style="left:39.5px;top:931.0px" width="15" height="11.500" viewBox="0 0 16 13" preserveAspectRatio="none"><path d="M0 1.200 Q0 0 1.200 0 H5.600 L7.200 1.800 H14.800 Q16 1.800 16 3 V11.800 Q16 13 14.800 13 H1.200 Q0 13 0 11.800 Z" fill="#c2c2c2"/></svg><div class="t h" style="left:60px;top:927px">Sprites</div>
<svg style="left:6px;top:952px;color:#707070" width="8" height="10"><use href="#fr"/></svg>
<svg style="left:22.5px;top:951.0px" width="15" height="11.500" viewBox="0 0 16 13" preserveAspectRatio="none"><path d="M0 1.200 Q0 0 1.200 0 H5.600 L7.200 1.800 H14.800 Q16 1.800 16 3 V11.800 Q16 13 14.800 13 H1.200 Q0 13 0 11.800 Z" fill="#c2c2c2"/></svg>
<div class="t b" style="left:44px;top:947px;font-size:15.5px;letter-spacing:.15px">Packages</div>
<!-- right pane -->
<div class="a" style="left:260px;top:748px;width:1205px;height:365px;background:#333"></div>
<div class="a" style="left:260px;top:748px;width:1205px;height:26px;background:#3c3c3c"></div>
<div class="a" style="left:260px;top:774px;width:1205px;height:1px;background:#2e2e2e"></div>
<div class="t h" style="left:265px;top:751px">Assets</div>
<svg style="left:322px;top:756px" width="7" height="11" viewBox="0 0 7 11"><path d="M1 1 L6 5.500 L1 10" fill="none" stroke="#a0a0a0" stroke-width="1.500"/></svg>
<div class="t b" style="left:335px;top:751px;font-size:15.5px;letter-spacing:.1px">Scripts</div>
<svg style="left:289px;top:792px" width="60" height="70" viewBox="0 0 60 70"><path d="M4 0 H44 L60 16 V66 Q60 70 56 70 H4 Q0 70 0 66 V4 Q0 0 4 0 Z" fill="#eeeeee"/><text x="29" y="57.500" font-size="60" font-weight="bold" text-anchor="middle" fill="#2a6e2c" stroke="#2a6e2c" stroke-width="1.800" font-family="Liberation Sans, sans-serif">#</text></svg><div class="t" style="left:292px;top:868px;font-size:13px;letter-spacing:.5px;color:#d2d2d2">Damage</div>
<svg style="left:384px;top:792px" width="60" height="70" viewBox="0 0 60 70"><path d="M4 0 H44 L60 16 V66 Q60 70 56 70 H4 Q0 70 0 66 V4 Q0 0 4 0 Z" fill="#eeeeee"/><text x="29" y="57.500" font-size="60" font-weight="bold" text-anchor="middle" fill="#2a6e2c" stroke="#2a6e2c" stroke-width="1.800" font-family="Liberation Sans, sans-serif">#</text></svg><div class="t" style="left:391px;top:868px;font-size:13px;letter-spacing:.5px;color:#d2d2d2">Health</div>
<svg style="left:479px;top:792px" width="60" height="70" viewBox="0 0 60 70"><path d="M4 0 H44 L60 16 V66 Q60 70 56 70 H4 Q0 70 0 66 V4 Q0 0 4 0 Z" fill="#eeeeee"/><text x="29" y="57.500" font-size="60" font-weight="bold" text-anchor="middle" fill="#2a6e2c" stroke="#2a6e2c" stroke-width="1.800" font-family="Liberation Sans, sans-serif">#</text></svg><div class="t" style="left:468px;top:868px;font-size:13px;letter-spacing:.5px;color:#d2d2d2">PlayerCont...</div>
<svg style="left:574px;top:792px" width="60" height="70" viewBox="0 0 60 70"><path d="M4 0 H44 L60 16 V66 Q60 70 56 70 H4 Q0 70 0 66 V4 Q0 0 4 0 Z" fill="#eeeeee"/><text x="29" y="57.500" font-size="60" font-weight="bold" text-anchor="middle" fill="#2a6e2c" stroke="#2a6e2c" stroke-width="1.800" font-family="Liberation Sans, sans-serif">#</text></svg><div class="t" style="left:569px;top:868px;font-size:13px;letter-spacing:.5px;color:#d2d2d2">UI_Control</div>
<div class="a" style="left:260px;top:1088px;width:1205px;height:25px;background:#404040"></div>
<div class="a" style="left:1376px;top:1099px;width:69px;height:2px;background:#6a6a6a;border-radius:1px"></div>
<div class="a" style="left:1410px;top:1094px;width:12px;height:12px;border-radius:50%;background:#a8a8a8"></div>

<!-- INSPECTOR PANEL -->
<div class="a" id="insp" style="left:1467px;top:92px;width:452px;height:1021px;background:#383838"></div>

<div class="a" style="left:1467px;top:92px;width:452px;height:24px;background:#282828"></div>
<div class="a" style="left:1467px;top:92px;width:119px;height:24px;background:#3c3c3c;border-radius:3px 3px 0 0"></div>
<div class="a" style="left:1467px;top:116px;width:452px;height:74px;background:#3c3c3c"></div>
<svg style="left:1479px;top:98px" width="13" height="13" viewBox="0 0 13 13"><circle cx="6.500" cy="6.500" r="6.300" fill="#c4c4c4"/><rect x="5.500" y="5.400" width="2" height="4.800" fill="#383838"/><rect x="5.500" y="2.600" width="2" height="1.900" fill="#383838"/></svg>
<div class="t" style="left:1497px;top:95px;letter-spacing:.45px;font-size:15.5px">Inspector</div>
<svg style="left:1876px;top:97px;color:#c4c4c4" width="11" height="12"><use href="#lock"/></svg>
<svg style="left:1900px;top:96.5px;color:#c4c4c4" width="4" height="13"><use href="#keb"/></svg>
<svg style="left:1473px;top:128px;color:#c4c4c4" width="29.500" height="28.400" viewBox="0 0 16 16" preserveAspectRatio="none"><path d="M8 1.200 L14.200 4.300 L14.200 11.400 L8 14.800 L1.800 11.400 L1.800 4.300 Z M1.800 4.300 L8 7.600 L14.200 4.300 M8 7.600 L8 14.800" fill="none" stroke="currentColor" stroke-width="0.850" stroke-linejoin="round"/></svg>
<svg style="left:1500px;top:155px;color:#c4c4c4" width="9" height="5"><use href="#dd"/></svg>
<div class="a" style="left:1526px;top:130px;width:17px;height:18px;background:#2a2a2a;border:1px solid #1e1e1e;border-radius:3px"></div>
<svg style="left:1529px;top:134px" width="11" height="9" viewBox="0 0 11 9"><path d="M1 4.600 L4 7.600 L10 1.200" fill="none" stroke="#e4e4e4" stroke-width="1.700"/></svg>
<div class="fld" style="left:1551px;top:127px;width:267px;height:23px"></div>
<div class="t b" style="left:1554px;top:129px;font-size:15.5px;letter-spacing:.1px;color:#e4e4e4">Canvas</div>
<div class="a" style="left:1822px;top:130px;width:17px;height:18px;background:#2a2a2a;border:1px solid #1e1e1e;border-radius:3px"></div>
<div class="t h" style="left:1844px;top:129px">Static</div>
<svg style="left:1901px;top:136px;color:#c4c4c4" width="10" height="6"><use href="#dd"/></svg>
<div class="t h" style="left:1517px;top:159px">Tag</div>
<div class="a" style="left:1551px;top:158px;width:156px;height:22px;background:#515151;border:1px solid #343434;border-bottom-color:#262626;border-radius:3px"></div>
<div class="t h" style="left:1555px;top:158px;color:#e4e4e4">Untagged</div>
<svg style="left:1691px;top:166px;color:#c4c4c4" width="10" height="6"><use href="#dd"/></svg>
<div class="t h" style="left:1723px;top:159px">Layer</div>
<div class="a" style="left:1770px;top:158px;width:143px;height:22px;background:#515151;border:1px solid #343434;border-bottom-color:#262626;border-radius:3px"></div>
<div class="t h" style="left:1774px;top:158px;color:#e4e4e4">UI</div>
<svg style="left:1896px;top:166px;color:#c4c4c4" width="10" height="6"><use href="#dd"/></svg>
<div class="a" style="left:1467px;top:190px;width:452px;height:1px;background:#1a1a1a"></div>
<div class="a" style="left:1467px;top:191px;width:452px;height:27px;background:#3e3e3e"></div><div class="a" style="left:1467px;top:218px;width:452px;height:1px;background:#1a1a1a"></div><svg style="left:1476px;top:199px;color:#6c6c6c" width="9" height="10.500"><use href="#fr"/></svg><svg style="left:1494px;top:196px" width="16" height="16" viewBox="0 0 16 16"><g fill="#cfcfcf"><path d="M6.600 6.600 L0.300 4.200 Q-0.300 -0.300 4.200 0.300 Z"/><path d="M9.400 6.600 L15.700 4.200 Q16.300 -0.300 11.800 0.300 Z"/><path d="M6.600 9.400 L0.300 11.800 Q-0.300 16.300 4.200 15.700 Z"/><path d="M9.400 9.400 L15.700 11.800 Q16.300 16.300 11.800 15.700 Z"/></g></svg><div class="t b" style="left:1542px;top:194px;font-size:15.5px;letter-spacing:.1px;color:#e4e4e4">Rect Transform</div><svg style="left:1847px;top:198px" width="13" height="13" viewBox="0 0 13 13"><circle cx="6.500" cy="6.500" r="6.300" fill="#c4c4c4"/><text x="6.500" y="10.400" font-size="10.500" font-weight="bold" text-anchor="middle" fill="#3e3e3e" font-family="Liberation Sans, sans-serif">?</text></svg><svg style="left:1873px;top:198px" width="13" height="13" viewBox="0 0 13 13"><path d="M0 3.500 H6.500 M10 3.500 H13 M0 9.500 H2 M5.500 9.500 H13" stroke="#c4c4c4" stroke-width="1.400"/><path d="M8.200 0.500 V6.500 M3.800 6.500 V12.500" stroke="#c4c4c4" stroke-width="2"/></svg><svg style="left:1902px;top:197.5px;color:#c4c4c4" width="4" height="13"><use href="#keb"/></svg>
<div class="a" style="left:1467px;top:219px;width:452px;height:27px;background:#3e3e3e"></div><div class="a" style="left:1467px;top:246px;width:452px;height:1px;background:#1a1a1a"></div><svg style="left:1476px;top:227px;color:#6c6c6c" width="9" height="10.500"><use href="#fr"/></svg><svg style="left:1493px;top:224px" width="18" height="16" viewBox="0 0 18 16"><rect x="2" y="2" width="14" height="11.500" fill="none" stroke="#cfcfcf" stroke-width="1.100"/><rect x="3.600" y="3.800" width="10.800" height="8" rx="1" fill="#c4c4c4"/><circle cx="2" cy="2" r="1.600" fill="#cfcfcf"/><circle cx="16" cy="2" r="1.600" fill="#cfcfcf"/><circle cx="2" cy="13.500" r="1.600" fill="#cfcfcf"/><circle cx="16" cy="13.500" r="1.600" fill="#cfcfcf"/></svg><div class="a" style="left:1517px;top:223.5px;width:17px;height:17.500px;background:#2a2a2a;border:1px solid #1e1e1e;border-radius:3px"></div><svg style="left:1520px;top:228px" width="11" height="9" viewBox="0 0 11 9"><path d="M1 4.600 L4 7.600 L10 1.200" fill="none" stroke="#e4e4e4" stroke-width="1.700"/></svg><div class="t b" style="left:1542px;top:222px;font-size:15.5px;letter-spacing:.1px;color:#e4e4e4">Canvas</div><svg style="left:1847px;top:226px" width="13" height="13" viewBox="0 0 13 13"><circle cx="6.500" cy="6.500" r="6.300" fill="#c4c4c4"/><text x="6.500" y="10.400" font-size="10.500" font-weight="bold" text-anchor="middle" fill="#3e3e3e" font-family="Liberation Sans, sans-serif">?</text></svg><svg style="left:1873px;top:226px" width="13" height="13" viewBox="0 0 13 13"><path d="M0 3.500 H6.500 M10 3.500 H13 M0 9.500 H2 M5.500 9.500 H13" stroke="#c4c4c4" stroke-width="1.400"/><path d="M8.200 0.500 V6.500 M3.800 6.500 V12.500" stroke="#c4c4c4" stroke-width="2"/></svg><svg style="left:1902px;top:225.5px;color:#c4c4c4" width="4" height="13"><use href="#keb"/></svg>
<div class="a" style="left:1467px;top:248px;width:452px;height:27px;background:#3e3e3e"></div><div class="a" style="left:1467px;top:275px;width:452px;height:1px;background:#1a1a1a"></div><svg style="left:1476px;top:256px;color:#6c6c6c" width="9" height="10.500"><use href="#fr"/></svg><svg style="left:1493px;top:253px" width="18" height="16" viewBox="0 0 18 16"><rect x="0.700" y="1.200" width="16.600" height="13.400" rx="2" fill="none" stroke="#a4a4a4" stroke-width="1.300"/><path d="M3 3.200 H14.800 V12.600 H8 V8 H3 Z" fill="#cdcdcd"/><rect x="3" y="8.600" width="4.400" height="4" fill="#2c2c2c"/><circle cx="16" cy="2.400" r="1.400" fill="#d8d8d8"/></svg><div class="a" style="left:1517px;top:252.5px;width:17px;height:17.500px;background:#2a2a2a;border:1px solid #1e1e1e;border-radius:3px"></div><svg style="left:1520px;top:257px" width="11" height="9" viewBox="0 0 11 9"><path d="M1 4.600 L4 7.600 L10 1.200" fill="none" stroke="#e4e4e4" stroke-width="1.700"/></svg><div class="t b" style="left:1542px;top:251px;font-size:15.5px;letter-spacing:.1px;color:#e4e4e4">Canvas Scaler</div><svg style="left:1847px;top:255px" width="13" height="13" viewBox="0 0 13 13"><circle cx="6.500" cy="6.500" r="6.300" fill="#c4c4c4"/><text x="6.500" y="10.400" font-size="10.500" font-weight="bold" text-anchor="middle" fill="#3e3e3e" font-family="Liberation Sans, sans-serif">?</text></svg><svg style="left:1873px;top:255px" width="13" height="13" viewBox="0 0 13 13"><path d="M0 3.500 H6.500 M10 3.500 H13 M0 9.500 H2 M5.500 9.500 H13" stroke="#c4c4c4" stroke-width="1.400"/><path d="M8.200 0.500 V6.500 M3.800 6.500 V12.500" stroke="#c4c4c4" stroke-width="2"/></svg><svg style="left:1902px;top:254.5px;color:#c4c4c4" width="4" height="13"><use href="#keb"/></svg>
<div class="a" style="left:1467px;top:276px;width:452px;height:27px;background:#3e3e3e"></div><div class="a" style="left:1467px;top:303px;width:452px;height:1px;background:#1a1a1a"></div><svg style="left:1476px;top:284px;color:#6c6c6c" width="9" height="10.500"><use href="#fr"/></svg><svg style="left:1493px;top:280px" width="18" height="18" viewBox="0 0 18 18"><path d="M0.800 0.800 L4 4 M14 14 L17 17" stroke="#5ab4e0" stroke-width="1.500"/><rect x="4" y="4" width="10.400" height="10" fill="none" stroke="#cfcfcf" stroke-width="1.200"/><circle cx="4" cy="4" r="1.500" fill="#cfcfcf"/><circle cx="14.400" cy="4" r="1.500" fill="#cfcfcf"/><circle cx="4" cy="14" r="1.500" fill="#cfcfcf"/><circle cx="14.400" cy="14" r="1.500" fill="#cfcfcf"/></svg><div class="a" style="left:1517px;top:280.5px;width:17px;height:17.500px;background:#2a2a2a;border:1px solid #1e1e1e;border-radius:3px"></div><svg style="left:1520px;top:285px" width="11" height="9" viewBox="0 0 11 9"><path d="M1 4.600 L4 7.600 L10 1.200" fill="none" stroke="#e4e4e4" stroke-width="1.700"/></svg><div class="t b" style="left:1542px;top:279px;font-size:15.5px;letter-spacing:.1px;color:#e4e4e4">Graphic Raycaster</div><svg style="left:1847px;top:283px" width="13" height="13" viewBox="0 0 13 13"><circle cx="6.500" cy="6.500" r="6.300" fill="#c4c4c4"/><text x="6.500" y="10.400" font-size="10.500" font-weight="bold" text-anchor="middle" fill="#3e3e3e" font-family="Liberation Sans, sans-serif">?</text></svg><svg style="left:1873px;top:283px" width="13" height="13" viewBox="0 0 13 13"><path d="M0 3.500 H6.500 M10 3.500 H13 M0 9.500 H2 M5.500 9.500 H13" stroke="#c4c4c4" stroke-width="1.400"/><path d="M8.200 0.500 V6.500 M3.800 6.500 V12.500" stroke="#c4c4c4" stroke-width="2"/></svg><svg style="left:1902px;top:282.5px;color:#c4c4c4" width="4" height="13"><use href="#keb"/></svg>
<div class="a" style="left:1467px;top:304px;width:452px;height:26px;background:#3e3e3e"></div><svg style="left:1475px;top:314px;color:#8a8a8a" width="10" height="8"><use href="#fd"/></svg><svg style="left:1494px;top:308px" width="15.500" height="17.800" viewBox="0 0 14 17" preserveAspectRatio="none"><path d="M1.500 0 H9.500 L14 4.500 V15.500 Q14 17 12.500 17 H1.500 Q0 17 0 15.500 V1.500 Q0 0 1.500 0 Z" fill="#ececec"/><text x="6.600" y="13.600" font-size="12" font-weight="bold" text-anchor="middle" fill="#2a6e2c" stroke="#2a6e2c" stroke-width="0.300" font-family="Liberation Sans, sans-serif">#</text></svg><div class="t b" style="left:1542px;top:307px;font-size:15.5px;letter-spacing:.1px;color:#e4e4e4">UI_Control (Script)</div><svg style="left:1847px;top:311px" width="13" height="13" viewBox="0 0 13 13"><circle cx="6.500" cy="6.500" r="6.300" fill="#c4c4c4"/><text x="6.500" y="10.400" font-size="10.500" font-weight="bold" text-anchor="middle" fill="#3e3e3e" font-family="Liberation Sans, sans-serif">?</text></svg><svg style="left:1873px;top:311px" width="13" height="13" viewBox="0 0 13 13"><path d="M0 3.500 H6.500 M10 3.500 H13 M0 9.500 H2 M5.500 9.500 H13" stroke="#c4c4c4" stroke-width="1.400"/><path d="M8.200 0.500 V6.500 M3.800 6.500 V12.500" stroke="#c4c4c4" stroke-width="2"/></svg><svg style="left:1902px;top:310.5px;color:#c4c4c4" width="4" height="13"><use href="#keb"/></svg>
<div class="t h" style="left:1491px;top:337px;color:#8a8a8a">Script</div>
<div class="a" style="left:1647px;top:335px;width:266px;height:22px;background:#323232;border:1px solid #2a2a2a;border-radius:3px"></div>
<svg style="left:1653px;top:340px" width="11" height="13" viewBox="0 0 14 17"><path d="M1.500 0 H9.500 L14 4.500 V15.500 Q14 17 12.500 17 H1.500 Q0 17 0 15.500 V1.500 Q0 0 1.500 0 Z" fill="#8e8e8e"/><text x="6.800" y="13" font-size="11" font-weight="bold" text-anchor="middle" fill="#3a5a3c" font-family="Liberation Sans, sans-serif">#</text></svg>
<div class="t h" style="left:1669px;top:336px;color:#7e7e7e;letter-spacing:0">UI_Control</div>
<svg style="left:1895px;top:340px" width="14" height="14" viewBox="0 0 14 14"><circle cx="7" cy="7" r="5.600" fill="none" stroke="#808080" stroke-width="1.200"/><circle cx="7" cy="7" r="2" fill="#808080"/></svg>
<svg style="left:1489px;top:367px;color:#8a8a8a" width="11" height="8"><use href="#fd"/></svg>
<div class="t h" style="left:1507px;top:361px">Hepcat</div>
<div class="fld" style="left:1850px;top:360px;width:62px;height:21px"></div>
<div class="t h" style="left:1854px;top:361px">3</div>
<div class="a" style="left:1486px;top:383px;width:426px;height:89px;background:#414141;border:1px solid #242424;border-radius:3px"></div>
<div class="a" style="left:1491px;top:395px;width:13px;height:1px;background:#5e5e5e"></div><div class="a" style="left:1491px;top:398px;width:13px;height:1px;background:#5e5e5e"></div><div class="t h" style="left:1528px;top:391px;letter-spacing:.1px">Element 0</div><div class="a" style="left:1647px;top:389px;width:260px;height:22px;background:#2a2a2a;border:1px solid #202020;border-radius:3px"></div><div class="a" style="left:1884px;top:390px;width:22px;height:20px;background:#373737;border-radius:0 2px 2px 0"></div><svg style="left:1888px;top:393px" width="14" height="14" viewBox="0 0 14 14"><circle cx="7" cy="7" r="5.600" fill="none" stroke="#d0d0d0" stroke-width="1.300"/><circle cx="7" cy="7" r="2.100" fill="#d0d0d0"/></svg><svg style="left:1651px;top:394px" width="14" height="12" viewBox="0 0 14 12"><path d="M0 0 h3 v3 h-3z M11 0 h3 v3 h-3z M0 9 h3 v3 h-3z M11 9 h3 v3 h-3z" fill="#e0e0e0"/><path d="M1.500 1.500 H12.500 V10.500 H1.500 Z" fill="none" stroke="#e0e0e0" stroke-width="1"/><path d="M2.500 9.500 L5.500 5.500 L7.500 8 L9 6.500 L11.500 9.500 Z" fill="#e0e0e0"/><circle cx="9.500" cy="4" r="1" fill="#e0e0e0"/></svg><div class="t h" style="left:1668px;top:390px;font-size:15.300px;letter-spacing:0">Image (Image)</div>
<div class="a" style="left:1491px;top:422px;width:13px;height:1px;background:#5e5e5e"></div><div class="a" style="left:1491px;top:425px;width:13px;height:1px;background:#5e5e5e"></div><div class="t h" style="left:1528px;top:418px;letter-spacing:.1px">Element 1</div><div class="a" style="left:1647px;top:416px;width:260px;height:22px;background:#2a2a2a;border:1px solid #202020;border-radius:3px"></div><div class="a" style="left:1884px;top:417px;width:22px;height:20px;background:#373737;border-radius:0 2px 2px 0"></div><svg style="left:1888px;top:420px" width="14" height="14" viewBox="0 0 14 14"><circle cx="7" cy="7" r="5.600" fill="none" stroke="#d0d0d0" stroke-width="1.300"/><circle cx="7" cy="7" r="2.100" fill="#d0d0d0"/></svg><svg style="left:1651px;top:421px" width="14" height="12" viewBox="0 0 14 12"><path d="M0 0 h3 v3 h-3z M11 0 h3 v3 h-3z M0 9 h3 v3 h-3z M11 9 h3 v3 h-3z" fill="#e0e0e0"/><path d="M1.500 1.500 H12.500 V10.500 H1.500 Z" fill="none" stroke="#e0e0e0" stroke-width="1"/><path d="M2.500 9.500 L5.500 5.500 L7.500 8 L9 6.500 L11.500 9.500 Z" fill="#e0e0e0"/><circle cx="9.500" cy="4" r="1" fill="#e0e0e0"/></svg><div class="t h" style="left:1668px;top:417px;font-size:15.300px;letter-spacing:0">Image (1) (Image)</div>
<div class="a" style="left:1491px;top:449px;width:13px;height:1px;background:#5e5e5e"></div><div class="a" style="left:1491px;top:452px;width:13px;height:1px;background:#5e5e5e"></div><div class="t h" style="left:1528px;top:445px;letter-spacing:.1px">Element 2</div><div class="a" style="left:1647px;top:443px;width:260px;height:22px;background:#2a2a2a;border:1px solid #202020;border-radius:3px"></div><div class="a" style="left:1884px;top:444px;width:22px;height:20px;background:#373737;border-radius:0 2px 2px 0"></div><svg style="left:1888px;top:447px" width="14" height="14" viewBox="0 0 14 14"><circle cx="7" cy="7" r="5.600" fill="none" stroke="#d0d0d0" stroke-width="1.300"/><circle cx="7" cy="7" r="2.100" fill="#d0d0d0"/></svg><svg style="left:1651px;top:448px" width="14" height="12" viewBox="0 0 14 12"><path d="M0 0 h3 v3 h-3z M11 0 h3 v3 h-3z M0 9 h3 v3 h-3z M11 9 h3 v3 h-3z" fill="#e0e0e0"/><path d="M1.500 1.500 H12.500 V10.500 H1.500 Z" fill="none" stroke="#e0e0e0" stroke-width="1"/><path d="M2.500 9.500 L5.500 5.500 L7.500 8 L9 6.500 L11.500 9.500 Z" fill="#e0e0e0"/><circle cx="9.500" cy="4" r="1" fill="#e0e0e0"/></svg><div class="t h" style="left:1668px;top:444px;font-size:15.300px;letter-spacing:0">Image (2) (Image)</div>
<div class="a" style="left:1827px;top:471px;width:67px;height:28px;background:#3c3c3c;border:1px solid #242424;border-top:0;border-radius:0 0 4px 4px"></div>
<svg style="left:1840px;top:480px" width="13" height="13" viewBox="0 0 13 13"><path d="M6.500 0.500 V12.500 M0.500 6.500 H12.500" stroke="#e4e4e4" stroke-width="2"/></svg>
<div class="a" style="left:1870px;top:485px;width:9px;height:2px;background:#e4e4e4"></div>
<div class="a" style="left:1467px;top:508px;width:452px;height:1px;background:#1a1a1a"></div>
<div class="a" style="left:1550px;top:520px;width:285px;height:28px;background:#585858;border-radius:3px"></div>
<div class="t h" style="left:1635px;top:524px;letter-spacing:.22px;color:#eee">Add Component</div>

<!-- STATUS BAR -->
<div class="a" id="status" style="left:0;top:1113px;width:1919px;height:24px;background:#191919"></div>

<svg style="left:3px;top:1117px" width="17" height="18" viewBox="0 0 17 18"><circle cx="8" cy="8" r="8" fill="#f0f0f0"/><path d="M9 14.500 L15.500 17.500 L14 10 Z" fill="#f0f0f0"/><rect x="6.900" y="3" width="2.300" height="6.600" fill="#191919"/><rect x="6.900" y="10.800" width="2.300" height="2.300" fill="#191919"/></svg>
<div class="t" style="left:25px;top:1118px;font-size:15px">0</div>
<div class="a" style="left:1789px;top:1116px;width:1px;height:21px;background:#262626"></div>
<div class="a" style="left:1822px;top:1116px;width:1px;height:21px;background:#262626"></div>
<div class="a" style="left:1854px;top:1116px;width:1px;height:21px;background:#262626"></div>
<div class="a" style="left:1887px;top:1116px;width:1px;height:21px;background:#262626"></div>
<svg style="left:1796px;top:1119px" width="18" height="18" viewBox="0 0 18 18"><ellipse cx="9" cy="11" rx="5.600" ry="7.400" fill="#c4c4c4"/><circle cx="9" cy="4.600" r="3" fill="#c4c4c4"/><path d="M6 3 L3.800 0.400 M12 3 L14.200 0.400 M4 8 L0.800 5.800 M14 8 L17.200 5.800 M3.600 12 H0.300 M14.400 12 H17.700 M4.500 15.500 L1.500 18 M13.500 15.500 L16.500 18" stroke="#c4c4c4" stroke-width="1.400"/><path d="M2.400 1.500 L18 19.500" stroke="#191919" stroke-width="2.400"/><path d="M1 0.500 L17 19" stroke="#c4c4c4" stroke-width="1.300"/></svg>
<svg style="left:1828px;top:1119px" width="18" height="18" viewBox="0 0 18 18"><ellipse cx="9" cy="4" rx="7.500" ry="3.600" fill="#c4c4c4"/><path d="M1.500 6.500 Q9 11.500 16.500 6.500 V10 Q9 15 1.500 10 Z M1.500 11.800 Q9 16.800 16.500 11.800 V15 Q9 20 1.500 15 Z" fill="#c4c4c4"/><path d="M1 0 L17.500 19" stroke="#191919" stroke-width="3.600"/><path d="M1 0 L17.500 19" stroke="#c4c4c4" stroke-width="1.300"/></svg>
<svg style="left:1860px;top:1119px" width="19" height="18" viewBox="0 0 19 18"><path d="M2.500 7 A7.500 7.500 0 0 1 15 4 M16.500 11 A7.500 7.500 0 0 1 4 14" fill="none" stroke="#c4c4c4" stroke-width="1.400"/><path d="M13 1 L17.500 2 L15.500 6.500 Z M6 17 L1.500 16 L3.500 11.500 Z" fill="#c4c4c4"/><circle cx="9.500" cy="8" r="3.400" fill="#c4c4c4"/><rect x="7.800" y="11" width="3.400" height="3" fill="#c4c4c4"/><path d="M2 0 L17.500 18" stroke="#191919" stroke-width="3.600"/><path d="M2 0 L17.500 18" stroke="#c4c4c4" stroke-width="1.300"/></svg>
<svg style="left:1893px;top:1118px" width="18" height="19" viewBox="0 0 18 19"><circle cx="9" cy="9.600" r="8.300" fill="none" stroke="#c4c4c4" stroke-width="1.200"/><path d="M5.400 9.800 L8 12.400 L12.600 7.400" fill="none" stroke="#e8e8e8" stroke-width="1.500"/></svg>
</body>
</html>
